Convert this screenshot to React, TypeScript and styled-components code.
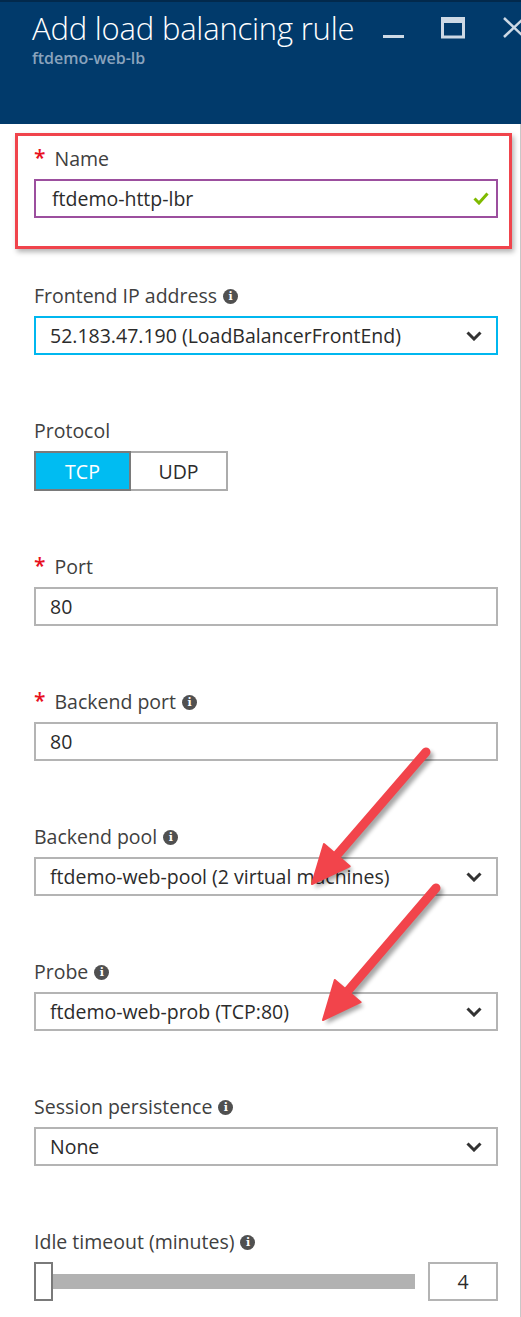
import React from "react";
import styled, { createGlobalStyle } from "styled-components";

const GlobalStyle = createGlobalStyle`
  html, body { margin: 0; padding: 0; background: #ffffff; }
  body { font-family: "Open Sans", "Noto Sans", "Liberation Sans", sans-serif; }
  * { box-sizing: border-box; }
`;

const Panel = styled.div`
  position: relative;
  width: 521px;
  height: 1317px;
  overflow: hidden;
  background: #fff;
`;

const Header = styled.header`
  height: 124px;
  background: #013a6b;
  border-top: 2px solid #02294c;
  padding: 7px 0 0 32px;
  display: flex;
  align-items: flex-start;
`;

const TitleBlock = styled.div`
  display: flex;
  flex-direction: column;
`;

const Title = styled.h1`
  margin: 0;
  font-family: "Open Sans", "Noto Sans", sans-serif;
  font-weight: 300;
  font-size: 31px;
  line-height: 38px;
  color: #ffffff;
  letter-spacing: -0.2px;
  white-space: nowrap;
`;

const Subtitle = styled.div`
  font-size: 16px;
  font-weight: 600;
  line-height: 18px;
  color: #8aa3bd;
  margin-top: 2px;
`;

const WindowControls = styled.div`
  display: flex;
  align-items: flex-start;
  margin-left: auto;
  margin-right: -4px;
  margin-top: 7px;
`;

const CtrlIcon = styled.svg`
  display: block;
  flex: none;
`;

const Body = styled.main`
  height: 1193px;
  border-right: 1px solid #c8c8c8;
  padding: 9px 22px 0 34px;
  display: flex;
  flex-direction: column;
`;

const HighlightCard = styled.section`
  margin: 0 -14px 36px -19px;
  padding: 12px 11px 28px 16px;
  border: 3px solid #f0444c;
  box-shadow: 2px 3px 5px rgba(0, 0, 0, 0.3);
`;

const Fields = styled.div`
  display: flex;
  flex-direction: column;
  gap: 65px;
`;

const Field = styled.div`
  display: flex;
  flex-direction: column;
`;

const Label = styled.div`
  display: flex;
  align-items: center;
  height: 22px;
  font-size: 19.5px;
  line-height: 22px;
  color: #404040;
  margin-bottom: 9px;
  white-space: nowrap;
`;

const Required = styled.span`
  color: #e8101e;
  font-size: 21px;
  font-weight: 600;
  margin-right: 9px;
  position: relative;
  top: -2px;
`;

const InfoDot = styled.span`
  display: inline-flex;
  align-items: center;
  justify-content: center;
  width: 15px;
  height: 15px;
  border-radius: 50%;
  background: #505050;
  color: #fff;
  font-family: "DejaVu Serif", serif;
  font-size: 11px;
  font-weight: 700;
  line-height: 1;
  margin-left: 6px;
`;

const Box = styled.div<{ $border?: string; $padL?: number; $padR?: number }>`
  height: 39px;
  border: 2px solid ${(p) => p.$border ?? "#b4b4b4"};
  display: flex;
  align-items: center;
  padding: 0 ${(p) => p.$padR ?? 14}px 0 ${(p) => p.$padL ?? 14}px;
  font-size: 19.5px;
  color: #2b2b2b;
  white-space: nowrap;
  background: #fff;
`;

const BoxText = styled.span`
  flex: 1;
`;

const Toggle = styled.div`
  display: flex;
`;

const ToggleBtn = styled.div<{ $active?: boolean }>`
  width: 97px;
  height: 40px;
  display: flex;
  align-items: center;
  justify-content: center;
  font-size: 19.5px;
  background: ${(p) => (p.$active ? "#00bcf2" : "#fff")};
  color: ${(p) => (p.$active ? "#fff" : "#2b2b2b")};
  border: 2px solid ${(p) => (p.$active ? "#7a7a7a" : "#acacac")};
  ${(p) => (p.$active ? "" : "border-left: none;")}
`;

const SliderRow = styled.div`
  display: flex;
  align-items: center;
  height: 39px;
`;

const Thumb = styled.div`
  width: 19px;
  height: 39px;
  border: 2px solid #7a7a7a;
  background: #fff;
  flex: none;
`;

const Track = styled.div`
  width: 362px;
  height: 15px;
  background: #b2b2b2;
  flex: none;
`;

const ValueBox = styled.div`
  margin-left: 13px;
  width: 70px;
  height: 39px;
  border: 2px solid #b4b4b4;
  display: flex;
  align-items: center;
  justify-content: center;
  font-size: 19.5px;
  color: #2b2b2b;
`;

const Overlay = styled.svg`
  position: absolute;
  left: 0;
  top: 0;
  pointer-events: none;
`;

const Chevron = () => (
  <svg width="16" height="10" viewBox="0 0 16 10">
    <polyline points="1.5,1.5 8,8 14.5,1.5" fill="none" stroke="#333" strokeWidth="3" />
  </svg>
);

const Check = () => (
  <svg width="16" height="13" viewBox="0 0 16 13">
    <polyline points="1.5,6.5 6,11 14.5,1.5" fill="none" stroke="#7fba00" strokeWidth="3" />
  </svg>
);

type Pt = [number, number];

const Arrow = ({ tail, tip }: { tail: Pt; tip: Pt }) => {
  const dx = tip[0] - tail[0];
  const dy = tip[1] - tail[1];
  const len = Math.hypot(dx, dy);
  const ux = dx / len;
  const uy = dy / len;
  const nx = -uy;
  const ny = ux;
  const hl = 38;
  const hw = 17;
  const bx = tip[0] - ux * hl;
  const by = tip[1] - uy * hl;
  const head = `${tip[0]},${tip[1]} ${bx + nx * hw},${by + ny * hw} ${bx - nx * hw},${by - ny * hw}`;
  const shaftEnd: Pt = [bx + ux * 6, by + uy * 6];
  return (
    <g>
      <g transform="translate(3,4)" opacity="0.35" filter="url(#blur)">
        <line x1={tail[0]} y1={tail[1]} x2={shaftEnd[0]} y2={shaftEnd[1]} stroke="#000" strokeWidth="9" strokeLinecap="round" />
        <polygon points={head} fill="#000" />
      </g>
      <line x1={tail[0]} y1={tail[1]} x2={shaftEnd[0]} y2={shaftEnd[1]} stroke="#f2444b" strokeWidth="9" strokeLinecap="round" />
      <polygon points={head} fill="#f2444b" strokeLinejoin="round" stroke="#f2444b" strokeWidth="2" />
    </g>
  );
};

const SelectField = ({ label, value, info, border }: { label: string; value: string; info?: boolean; border?: string }) => (
  <Field>
    <Label>
      {label}
      {info && <InfoDot>i</InfoDot>}
    </Label>
    <Box $border={border}>
      <BoxText>{value}</BoxText>
      <Chevron />
    </Box>
  </Field>
);

export default function App() {
  return (
    <>
      <GlobalStyle />
      <Panel>
        <Header>
          <TitleBlock>
            <Title>Add load balancing rule</Title>
            <Subtitle>ftdemo-web-lb</Subtitle>
          </TitleBlock>
          <WindowControls>
            <CtrlIcon width="58" height="30" viewBox="0 0 58 30">
              <rect x="0" y="19" width="21" height="3" fill="#cdd9e5" />
            </CtrlIcon>
            <CtrlIcon width="62" height="30" viewBox="0 0 62 30">
              <rect x="1.5" y="2.5" width="21" height="18.5" fill="none" stroke="#cdd9e5" strokeWidth="3" />
              <rect x="0" y="1" width="24" height="6" fill="#cdd9e5" />
            </CtrlIcon>
            <CtrlIcon width="22" height="30" viewBox="0 0 22 30">
              <line x1="1" y1="2" x2="21" y2="21" stroke="#cdd9e5" strokeWidth="2.5" />
              <line x1="21" y1="2" x2="1" y2="21" stroke="#cdd9e5" strokeWidth="2.5" />
            </CtrlIcon>
          </WindowControls>
        </Header>
        <Body>
          <HighlightCard>
            <Field>
              <Label>
                <Required>*</Required>Name
              </Label>
              <Box $border="#9c4f9e" $padL={16} $padR={7}>
                <BoxText>ftdemo-http-lbr</BoxText>
                <Check />
              </Box>
            </Field>
          </HighlightCard>
          <Fields>
            <SelectField label="Frontend IP address" info value="52.183.47.190 (LoadBalancerFrontEnd)" border="#00b7ef" />
            <Field>
              <Label>Protocol</Label>
              <Toggle>
                <ToggleBtn $active>TCP</ToggleBtn>
                <ToggleBtn>UDP</ToggleBtn>
              </Toggle>
            </Field>
            <Field>
              <Label>
                <Required>*</Required>Port
              </Label>
              <Box>
                <BoxText>80</BoxText>
              </Box>
            </Field>
            <Field>
              <Label>
                <Required>*</Required>Backend port<InfoDot>i</InfoDot>
              </Label>
              <Box>
                <BoxText>80</BoxText>
              </Box>
            </Field>
            <SelectField label="Backend pool" info value="ftdemo-web-pool (2 virtual machines)" />
            <SelectField label="Probe" info value="ftdemo-web-prob (TCP:80)" />
            <SelectField label="Session persistence" info value="None" />
            <Field>
              <Label>
                Idle timeout (minutes)<InfoDot>i</InfoDot>
              </Label>
              <SliderRow>
                <Thumb />
                <Track />
                <ValueBox>4</ValueBox>
              </SliderRow>
            </Field>
          </Fields>
        </Body>
        <Overlay width="521" height="1317" viewBox="0 0 521 1317">
          <defs>
            <filter id="blur" x="-20%" y="-20%" width="140%" height="140%">
              <feGaussianBlur stdDeviation="2" />
            </filter>
          </defs>
          <Arrow tail={[426, 752]} tip={[312, 884]} />
          <Arrow tail={[436, 888]} tip={[323, 1020]} />
        </Overlay>
      </Panel>
    </>
  );
}
